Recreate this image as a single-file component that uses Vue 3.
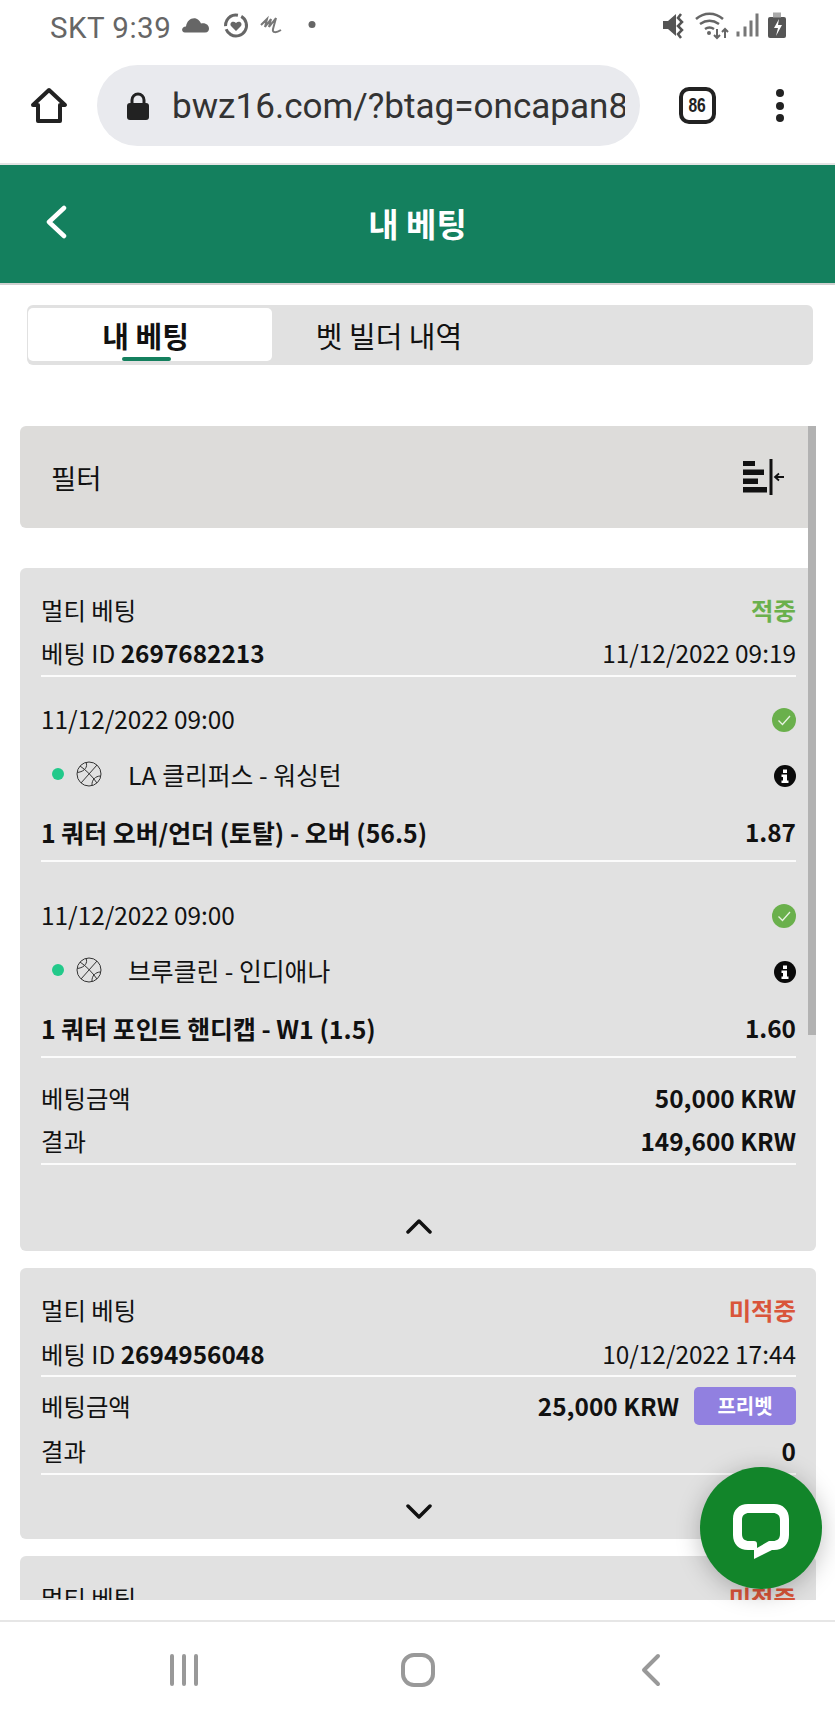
<script setup>
const legs = [
  { date: '11/12/2022 09:00', teams: 'LA 클리퍼스 - 워싱턴', market: '1 쿼터 오버/언더 (토탈) - 오버 (56.5)', odds: '1.87' },
  { date: '11/12/2022 09:00', teams: '브루클린 - 인디애나', market: '1 쿼터 포인트 핸디캡 - W1 (1.5)', odds: '1.60' }
]
</script>

<template>
  <div class="page">
    <div class="status">
      <div class="status-left">
        <span class="carrier">SKT 9:39</span>
        <svg class="status-icons-left" width="140" height="40" viewBox="0 0 140 40">
          <path d="M5 24.500c-4 0-4-6 1-6 1-6 5-9 10-8 3 1 4 3 5 5 5-1 8 2 8 5 0 2-1 4-4 4z" fill="#666" />
          <circle cx="56" cy="17.500" r="10.500" fill="none" stroke="#666" stroke-width="3" stroke-dasharray="40 3 19 4" transform="rotate(-60 56 17.500)" />
          <path d="M56 23l-5-5c-2-3 2-6 5-3 3-3 7 0 5 3z" fill="#666" />
          <path d="M81 17l6-6-2 8 6-8-2 8 7-9-3 11c-1 4 3 4 8 1" fill="none" stroke="#777" stroke-width="2" />
          <circle cx="132" cy="16.500" r="3.500" fill="#666" />
        </svg>
      </div>
      <svg class="status-icons-right" width="150" height="40" viewBox="0 0 150 40">
        <path d="M13 13h5l8-7v22l-8-7h-5z" fill="#555" />
        <path d="M31 6l-3 4 4 4-4 4 4 4-4 4 3 4" fill="none" stroke="#555" stroke-width="2.500" />
        <path d="M46 11c8-7 19-7 27 0M50 16c6-4 13-4 19 0M55 21c3-2 6-2 9 0" fill="none" stroke="#666" stroke-width="2.500" />
        <circle cx="59" cy="25" r="2" fill="#666" />
        <path d="M67 21v9M64 27l3 3 3-3M75 30v-9M72 24l3-3 3 3" fill="none" stroke="#666" stroke-width="2" />
        <path d="M88 28.500v-5M95 28.500v-10M101 28.500v-16M107 28.500v-23" fill="none" stroke="#777" stroke-width="3" />
        <rect x="118" y="9" width="18" height="21" rx="2" fill="#555" />
        <rect x="123" y="4.500" width="8" height="5" fill="#aaa" />
        <path d="M129 11l-5 9h4l-2 8 6-11h-4z" fill="#fff" />
      </svg>
    </div>

    <div class="browser">
      <svg class="home" width="38" height="38" viewBox="0 0 38 38">
        <path d="M3 18L19 3l16 15h-5v16H8V18z" fill="none" stroke="#222" stroke-width="4" stroke-linejoin="round" />
      </svg>
      <div class="address">
        <svg class="lock" width="22" height="28" viewBox="0 0 22 28">
          <path d="M5 12V8a6 6 0 0 1 12 0v4" fill="none" stroke="#222" stroke-width="3" />
          <rect x="0" y="11" width="22" height="17" rx="3" fill="#222" />
        </svg>
        <span class="url">bwz16.com/?btag=oncapan8</span>
      </div>
      <div class="tabcount"><span>86</span></div>
      <div class="menu"><i></i><i></i><i></i></div>
    </div>

    <header class="appbar">
      <svg class="back" width="24" height="34" viewBox="0 0 24 34">
        <path d="M20 3L5 17l15 14" fill="none" stroke="#fff" stroke-width="4.500" stroke-linecap="round" stroke-linejoin="round" />
      </svg>
      <h1>내 베팅</h1>
    </header>

    <main class="content">
      <div class="tabs">
        <div class="tab active">내 베팅</div>
        <div class="tab">벳 빌더 내역</div>
      </div>

      <div class="filter">
        <span>필터</span>
        <svg width="44" height="38" viewBox="0 0 44 38">
          <path d="M1 3h12v5H1zM1 11.500h21v5.500H1zM1 20.500h15v5.500H1zM1 29h24v5.500H1z" fill="#111" />
          <path d="M29 1v36" stroke="#111" stroke-width="3" />
          <path d="M33 19h9M37 15.500L33 19l4 3.500" fill="none" stroke="#111" stroke-width="1.800" />
        </svg>
      </div>

      <section class="card">
        <div class="row r-head"><span>멀티 베팅</span><b class="won">적중</b></div>
        <div class="row r-id line"><span>베팅 ID <b>2697682213</b></span><span>11/12/2022 09:19</span></div>
        <div class="legs">
          <div v-for="(leg, i) in legs" :key="i" class="leg">
            <div class="row r-date">
              <span>{{ leg.date }}</span>
              <svg width="24" height="24" viewBox="0 0 24 24">
                <circle cx="12" cy="12" r="12" fill="#6ab04c" />
                <path d="M6.500 12.500l4 4 7.500-8.500" fill="none" stroke="#e8f3e2" stroke-width="1.300" />
              </svg>
            </div>
            <div class="row r-teams">
              <span class="teams">
                <i class="dot"></i>
                <svg class="ball" width="26" height="26" viewBox="0 0 26 26">
                  <g fill="none" stroke="#333" stroke-width="1">
                    <circle cx="13" cy="13" r="12" />
                    <path d="M4 5c6 4 12 10 17 17M21 4L5 22M10 1.500c2 4-1 9-8.500 10M24.500 15c-5 0-9 4-8.500 9.500" />
                  </g>
                </svg>
                <span>{{ leg.teams }}</span>
              </span>
              <svg class="info" width="22" height="22" viewBox="0 0 22 22">
                <circle cx="11" cy="11" r="11" fill="#0a0a0a" />
                <path d="M9 4.500h4v3.500H9zM7.500 9.500H13v6h1.500v2.500h-7v-2.500H9V12H7.500z" fill="#fff" />
              </svg>
            </div>
            <div class="row r-market line"><b>{{ leg.market }}</b><b class="odds">{{ leg.odds }}</b></div>
          </div>
        </div>
        <div class="summary">
          <div class="row r-stake"><span>베팅금액</span><b>50,000 KRW</b></div>
          <div class="row r-result line"><span>결과</span><b>149,600 KRW</b></div>
        </div>
        <div class="foot foot-open">
          <svg width="26" height="16" viewBox="0 0 26 16">
            <path d="M2 14L13 3l11 11" fill="none" stroke="#111" stroke-width="3.500" stroke-linecap="round" stroke-linejoin="round" />
          </svg>
        </div>
      </section>

      <section class="card">
        <div class="row r-head"><span>멀티 베팅</span><b class="lost">미적중</b></div>
        <div class="row r-id2 line"><span>베팅 ID <b>2694956048</b></span><span>10/12/2022 17:44</span></div>
        <div class="row r-stake2">
          <span>베팅금액</span>
          <span class="stake-right"><b>25,000 KRW</b><em class="badge">프리벳</em></span>
        </div>
        <div class="row r-result2 line"><span>결과</span><b>0</b></div>
        <div class="foot foot-closed">
          <svg width="26" height="16" viewBox="0 0 26 16">
            <path d="M2 2l11 11L24 2" fill="none" stroke="#111" stroke-width="3.500" stroke-linecap="round" stroke-linejoin="round" />
          </svg>
        </div>
      </section>

      <section class="card">
        <div class="row r-head"><span>멀티 베팅</span><b class="lost">미적중</b></div>
      </section>

      <div class="scrollbar"></div>
    </main>

    <nav class="nav">
      <svg width="30" height="34" viewBox="0 0 30 34">
        <path d="M3 3v28M15 3v28M27 3v28" stroke="#999" stroke-width="4" stroke-linecap="round" />
      </svg>
      <svg class="nav-home" width="34" height="34" viewBox="0 0 34 34">
        <rect x="2" y="2" width="30" height="30" rx="11" fill="none" stroke="#999" stroke-width="4" />
      </svg>
      <svg width="20" height="34" viewBox="0 0 20 34">
        <path d="M17 3L3 17l14 14" fill="none" stroke="#999" stroke-width="4" stroke-linecap="round" stroke-linejoin="round" />
      </svg>
    </nav>

    <div class="chat">
      <svg width="58" height="56" viewBox="0 0 58 56">
        <path fill-rule="evenodd" fill="#fff" d="M16 1h26c9 0 15 6 15 15v16c0 9-6 15-15 15H40L22 56v-9h-6C7 47 1 41 1 32V16C1 7 7 1 16 1zM17 10c-4 0-7 2-7 7v14c0 5 3 7 7 7h5c2 0 3 1 3 3v4l12-7h4c4 0 7-2 7-7V17c0-5-3-7-7-7z" />
      </svg>
    </div>
  </div>
</template>

<style>
html, body { margin: 0; background: #fff; }
</style>

<style scoped>
.page {
  position: relative;
  width: 835px;
  height: 1717px;
  overflow: hidden;
  background: #fff;
  color: #111;
  display: flex;
  flex-direction: column;
  font-family: "Noto Sans CJK KR", "Noto Sans", sans-serif;
  font-size: 24.400px;
}
.status {
  height: 55px;
  flex: none;
  padding: 0 35px 0 50px;
  display: flex;
  align-items: center;
  justify-content: space-between;
  box-sizing: border-box;
}
.status-left { display: flex; align-items: center; gap: 9px; }
.carrier {
  font-family: Roboto, sans-serif;
  font-size: 29.500px;
  color: #666;
  letter-spacing: 0.500px;
}
.browser {
  height: 108px;
  flex: none;
  display: flex;
  align-items: center;
  padding: 0 0 7px 30px;
  box-sizing: border-box;
}
.home { flex: none; }
.address {
  flex: none;
  margin-left: 29px;
  width: 543px;
  height: 81px;
  border-radius: 41px;
  background: #e9eaee;
  display: flex;
  align-items: center;
  padding-left: 30px;
  box-sizing: border-box;
  gap: 23px;
  overflow: hidden;
}
.lock { flex: none; }
.url {
  flex: none;
  width: 453px;
  font-family: Roboto, sans-serif;
  font-size: 35.100px;
  color: #333;
  white-space: nowrap;
  overflow: hidden;
}
.tabcount {
  flex: none;
  margin-left: 39px;
  width: 29px;
  height: 29px;
  border: 4px solid #222;
  border-radius: 10px;
  display: flex;
  align-items: center;
  justify-content: center;
  font-family: "Liberation Sans", sans-serif;
  font-weight: 700;
  font-size: 20px;
  color: #222;
}
.tabcount span { transform: scaleX(0.78); }
.menu {
  margin-left: 60px;
  display: flex;
  flex-direction: column;
  gap: 4.500px;
}
.menu i { width: 8px; height: 8px; border-radius: 50%; background: #222; display: block; }

.appbar {
  height: 122px;
  flex: none;
  background: #14805e;
  border-top: 2px solid #e4e4e4;
  border-bottom: 2px solid #d0d0d0;
  box-sizing: border-box;
  display: flex;
  align-items: center;
  justify-content: center;
  position: relative;
  padding-bottom: 2px;
}
.appbar h1 {
  margin: 0;
  font-size: 33px;
  font-weight: 700;
  color: #fff;
}
.back { position: absolute; left: 44px; top: 40px; }

.content {
  position: relative;
  height: 1315px;
  flex: none;
  overflow: hidden;
  padding: 20px 19px 0 20px;
  box-sizing: border-box;
}
.tabs {
  height: 60px;
  margin: 0 3px 0 7px;
  background: #e1e1e1;
  border-radius: 6px;
  display: flex;
  padding: 3px 0 4px 1px;
  box-sizing: border-box;
}
.tab {
  width: 244px;
  display: flex;
  align-items: center;
  justify-content: center;
  font-size: 29px;
  position: relative;
  border-radius: 5px;
  box-sizing: border-box;
}
.tab + .tab { width: 234px; }
.tab.active {
  background: #fff;
  font-weight: 700;
  padding-right: 9px;
}
.tab.active::after {
  content: "";
  position: absolute;
  left: 94px;
  bottom: 0;
  width: 49px;
  height: 4px;
  border-radius: 2px;
  background: #14805e;
}
.filter {
  margin-top: 61px;
  height: 102px;
  background: #dddcda;
  border-radius: 6px;
  display: flex;
  align-items: center;
  justify-content: space-between;
  padding: 0 30px 0 31px;
  box-sizing: border-box;
  font-size: 27.500px;
}
.card {
  margin-top: 17px;
  background: #e1e1e1;
  border-radius: 6px;
  padding: 21px 20px 0 21px;
}
.filter + .card { margin-top: 40px; }
.row {
  display: flex;
  align-items: center;
  justify-content: space-between;
  white-space: nowrap;
  box-sizing: border-box;
}
.row > span, .row > b { margin-top: -3px; }
.line { border-bottom: 2px solid #fbfbfb; }
b { font-weight: 700; }
.won { color: #6ab04c; }
.lost { color: #d9553a; }
.r-head { height: 44px; }
.r-id { height: 44px; }
.r-id2 { height: 44px; padding-top: 1px; }
.legs { display: flex; flex-direction: column; gap: 11px; }
.leg { padding-top: 21px; }
.r-date { height: 44px; }
.r-teams { height: 66px; font-size: 24.800px; }
.r-market { height: 54px; padding-bottom: 2px; font-size: 24.900px; }
.odds { font-size: 24.400px; }
.teams { display: flex; align-items: center; padding-left: 11px; }
.dot { width: 12px; height: 12px; border-radius: 50%; background: #22c98a; }
.ball { margin-left: 12px; margin-right: 26px; }
.info { margin-top: 2px; }
.summary { padding-top: 19px; }
.r-stake { height: 44px; }
.r-result { height: 44px; }
.r-stake2 { height: 60px; }
.r-result2 { height: 38px; padding-bottom: 7px; }
.stake-right { display: flex; align-items: center; gap: 15px; }
.badge {
  width: 102px;
  height: 38px;
  border-radius: 5px;
  background: #9180e0;
  color: #fff;
  font-style: normal;
  font-weight: 700;
  font-size: 20px;
  display: flex;
  align-items: center;
  justify-content: center;
}
.foot { display: flex; justify-content: center; box-sizing: border-box; }
.foot-open { height: 86px; padding-top: 53px; }
.foot-closed { height: 64px; padding-top: 29px; }
.scrollbar {
  position: absolute;
  left: 808px;
  top: 141px;
  width: 8px;
  height: 609px;
  background: #b2b2b2;
}
.nav {
  margin-top: auto;
  height: 97px;
  border-top: 2px solid #e6e6e6;
  box-sizing: border-box;
  display: flex;
  align-items: center;
  padding: 0 174px 0 169px;
  justify-content: space-between;
}
.nav-home { margin-right: 5px; }
.chat {
  position: absolute;
  left: 700px;
  top: 1467px;
  width: 122px;
  height: 122px;
  border-radius: 50%;
  background: #12852a;
  box-shadow: 0 4px 24px rgba(0, 0, 0, 0.25);
  display: flex;
  align-items: center;
  justify-content: center;
  padding-top: 6px;
  box-sizing: border-box;
}
</style>
